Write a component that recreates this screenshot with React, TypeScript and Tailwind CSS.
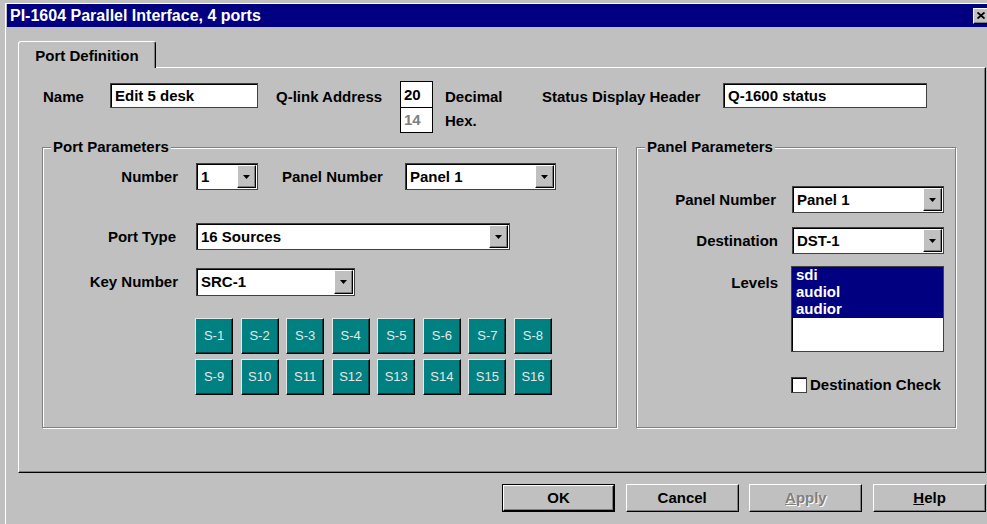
import type { ReactNode } from "react";

// ─── Shared 3D edge styles ──────────────────────────────────────────────────

const sunken = "border border-[#404040] shadow-[inset_1px_1px_0_#000]";
const raised =
  "border border-t-white border-l-white border-b-black border-r-black shadow-[inset_-1px_-1px_0_#808080]";
const label = "text-[15px] leading-[18px] font-bold text-black whitespace-nowrap";

const SOURCE_KEYS = [
  "S-1", "S-2", "S-3", "S-4", "S-5", "S-6", "S-7", "S-8",
  "S-9", "S10", "S11", "S12", "S13", "S14", "S15", "S16",
];

const LEVELS = ["sdi", "audiol", "audior"];

// ─── Controls ───────────────────────────────────────────────────────────────

function TextField({ value, className }: { value: string; className: string }) {
  return (
    <div className={`flex items-center bg-white pl-[4px] ${sunken} ${className}`}>
      <span className={label}>{value}</span>
    </div>
  );
}

function Combo({ value, className }: { value: string; className: string }) {
  return (
    <div className={`flex items-stretch bg-white ${sunken} ${className}`}>
      <span className={`flex flex-1 items-center pl-[4px] ${label}`}>{value}</span>
      <span
        className={`my-[1px] mr-[1px] flex w-[19px] items-center justify-center bg-[#c0c0c0] ${raised}`}
      >
        <svg width="7" height="4" viewBox="0 0 7 4" aria-hidden="true">
          <path d="M0 0h7L3.5 4z" fill="#000" />
        </svg>
      </span>
    </div>
  );
}

function GroupBox({
  title,
  className,
  children,
}: {
  title: string;
  className: string;
  children: ReactNode;
}) {
  return (
    <fieldset
      className={`border border-[#808080] shadow-[inset_1px_1px_0_#fff,1px_1px_0_#fff] ${className}`}
    >
      <legend className={`ml-[8px] bg-[#c0c0c0] px-[2px] ${label}`}>{title}</legend>
      {children}
    </fieldset>
  );
}

function DialogButton({
  children,
  primary = false,
}: {
  children: ReactNode;
  primary?: boolean;
}) {
  return (
    <div
      className={`h-[28px] w-[113px] ${primary ? "border border-black" : ""}`}
    >
      <div
        className={`flex h-full w-full items-center justify-center ${raised} ${label}`}
      >
        {children}
      </div>
    </div>
  );
}

function SourceKey({ name }: { name: string }) {
  return (
    <div
      className="flex h-[36px] w-[38px] items-center justify-center border border-t-[#e8e8e8] border-l-[#e8e8e8] border-b-black border-r-black bg-[#008080] text-[13px] text-[#e6e6e6] shadow-[inset_-1px_-1px_0_#004040]"
    >
      {name}
    </div>
  );
}

// ─── Dialog ─────────────────────────────────────────────────────────────────

export default function App() {
  return (
    <div className="h-[524px] w-[987px] overflow-hidden bg-[#c0c0c0] pl-[5px] pt-[3px] font-['Liberation_Sans',Arial,sans-serif]">
      <div className="h-full w-[990px] border-l border-t border-white pl-[1px]">
        {/* Title bar */}
        <div className="flex h-[23px] w-[984px] items-center bg-[#000080] pl-[3px]">
          <span className="text-[16px] font-bold leading-[18px] text-white">
            PI-1604 Parallel Interface, 4 ports
          </span>
          <span
            className={`ml-auto mr-[2px] flex h-[16px] w-[16px] items-center justify-center bg-[#c0c0c0] ${raised}`}
          >
            <svg width="8" height="7" viewBox="0 0 8 7" aria-hidden="true">
              <path d="M0.5 0.5L7.5 6.5M7.5 0.5L0.5 6.5" stroke="#000" strokeWidth="1.8" />
            </svg>
          </span>
        </div>

        {/* Tab strip */}
        <div
          className={`relative z-10 ml-[11px] mt-[14px] -mb-[1px] flex h-[27px] w-[138px] items-center justify-center rounded-t-[3px] border-l border-t border-r border-l-white border-t-white border-r-black bg-[#c0c0c0] pt-[2px] shadow-[inset_-1px_0_0_#808080] ${label}`}
        >
          Port Definition
        </div>

        {/* Tab page */}
        <div className="ml-[11px] h-[406px] w-[968px] border border-t-white border-l-white border-b-black border-r-black pl-[23px] pt-[13px] shadow-[inset_-1px_-1px_0_#808080]">
          {/* Name / address / status header row */}
          <div className="flex items-start pl-[1px]">
            <span className={`mt-[7px] w-[67px] ${label}`}>Name</span>
            <TextField value="Edit 5 desk" className="mt-[2px] h-[25px] w-[148px]" />
            <span className={`ml-[18px] mt-[7px] w-[124px] ${label}`}>Q-link Address</span>
            <div className="flex w-[33px] flex-col">
              <div className={`flex h-[27px] items-center border border-black bg-white pl-[3px] ${label}`}>
                20
              </div>
              <div className="flex h-[25px] items-center border border-t-0 border-black bg-white pl-[3px] text-[15px] font-bold leading-[18px] text-[#808080]">
                14
              </div>
            </div>
            <div className="ml-[12px] flex w-[97px] flex-col">
              <span className={`mt-[7px] ${label}`}>Decimal</span>
              <span className={`mt-[6px] ${label}`}>Hex.</span>
            </div>
            <span className={`mt-[7px] w-[181px] ${label}`}>Status Display Header</span>
            <TextField value="Q-1600 status" className="mt-[2px] h-[25px] w-[204px]" />
          </div>

          <div className="mt-[5px] flex items-start">
            {/* Port parameters */}
            <GroupBox title="Port Parameters" className="h-[290px] w-[575px]">
              <div className="mt-[7px] flex items-center">
                <span className={`w-[135px] text-right ${label}`}>Number</span>
                <Combo value="1" className="ml-[18px] h-[27px] w-[62px]" />
                <span className={`ml-[24px] w-[123px] ${label}`}>Panel Number</span>
                <Combo value="Panel 1" className="h-[27px] w-[151px]" />
              </div>
              <div className="mt-[33px] flex items-center">
                <span className={`w-[133px] text-right ${label}`}>Port Type</span>
                <Combo value="16 Sources" className="ml-[20px] h-[27px] w-[314px]" />
              </div>
              <div className="mt-[18px] flex items-center">
                <span className={`w-[135px] text-right ${label}`}>Key Number</span>
                <Combo value="SRC-1" className="ml-[18px] h-[28px] w-[159px]" />
              </div>
              <div className="ml-[152px] mt-[22px] grid w-[357px] grid-cols-8 gap-x-[7.57px] gap-y-[5px]">
                {SOURCE_KEYS.map((k) => (
                  <SourceKey key={k} name={k} />
                ))}
              </div>
            </GroupBox>

            {/* Panel parameters */}
            <GroupBox title="Panel Parameters" className="ml-[19px] h-[290px] w-[320px]">
              <div className="mt-[30px] flex items-center">
                <span className={`w-[139px] text-right ${label}`}>Panel Number</span>
                <Combo value="Panel 1" className="ml-[16px] h-[27px] w-[152px]" />
              </div>
              <div className="mt-[14px] flex items-center">
                <span className={`w-[141px] text-right ${label}`}>Destination</span>
                <Combo value="DST-1" className="ml-[14px] h-[27px] w-[152px]" />
              </div>
              <div className="mt-[12px] flex items-start">
                <span className={`mt-[8px] w-[141px] text-right ${label}`}>Levels</span>
                <div className={`ml-[13px] h-[86px] w-[153px] bg-white ${sunken}`}>
                  {LEVELS.map((lvl) => (
                    <div
                      key={lvl}
                      className="h-[17px] bg-[#000080] pl-[4px] text-[15px] font-bold leading-[16px] text-white"
                    >
                      {lvl}
                    </div>
                  ))}
                </div>
              </div>
              <div className="ml-[154px] mt-[24px] flex items-center">
                <span className={`h-[16px] w-[16px] bg-white ${sunken}`} />
                <span className={`ml-[3px] ${label}`}>Destination Check</span>
              </div>
            </GroupBox>
          </div>
        </div>

        {/* Dialog buttons */}
        <div className="ml-[495px] mt-[11px] flex gap-x-[10.7px]">
          <DialogButton primary>OK</DialogButton>
          <DialogButton>Cancel</DialogButton>
          <DialogButton>
            <span className="text-[#808080] [text-shadow:1px_1px_0_#fff]">
              <span className="underline">A</span>pply
            </span>
          </DialogButton>
          <DialogButton>
            <span>
              <span className="underline">H</span>elp
            </span>
          </DialogButton>
        </div>
      </div>
    </div>
  );
}
